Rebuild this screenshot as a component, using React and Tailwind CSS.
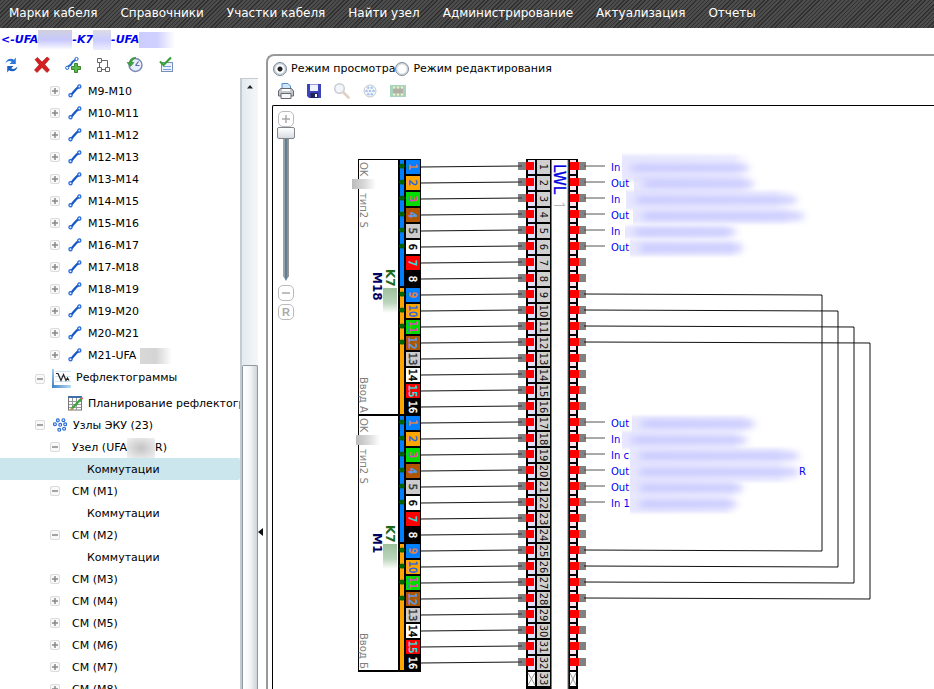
import React, { useState } from "react";

const MENU = ["Марки кабеля", "Справочники", "Участки кабеля", "Найти узел", "Администрирование", "Актуализация", "Отчеты"];

const SPANS = ["M9-M10", "M10-M11", "M11-M12", "M12-M13", "M13-M14", "M14-M15", "M15-M16", "M16-M17", "M17-M18", "M18-M19", "M19-M20", "M20-M21"];

function CableIcon() {
  return (
    <svg className="h-3.5 w-3.5 shrink-0" viewBox="0 0 14 14" fill="none">
      <path d="M3 10.500C5.500 9 5 8 6.500 7C8 6 7.500 5 10.500 3.200" stroke="#1458c8" strokeWidth="2.200" />
      <circle cx="2.500" cy="11.200" r="1.600" fill="#dcebff" stroke="#1e63d6" strokeWidth="1.200" />
      <circle cx="11.300" cy="2.500" r="1.600" fill="#dcebff" stroke="#1e63d6" strokeWidth="1.200" />
    </svg>
  );
}

function ReflectIcon() {
  return (
    <svg className="h-5 w-5 shrink-0" viewBox="0 0 20 20" fill="none">
      <defs>
        <linearGradient id="axisV" x1="0" y1="0" x2="0" y2="1">
          <stop offset="0" stopColor="#a8d0f0" />
          <stop offset="1" stopColor="#3c84c4" />
        </linearGradient>
        <linearGradient id="axisH" x1="0" y1="0" x2="1" y2="0">
          <stop offset="0" stopColor="#3c84c4" />
          <stop offset="1" stopColor="#b8dcf6" />
        </linearGradient>
      </defs>
      <path d="M3 2.500H19M3 7.500H19M3 12.500H19" stroke="#cfe6f5" />
      <rect x="0" y="0" width="2" height="19" fill="url(#axisV)" />
      <rect x="0" y="16" width="19" height="3" fill="url(#axisH)" />
      <path d="M4 4.500H6L9 11.500L11.500 5.500L14 11.500L15.500 9L17 11.500" stroke="#222" strokeWidth="1.200" />
    </svg>
  );
}

function PlanIcon() {
  return (
    <svg className="h-[15px] w-[15px] shrink-0" viewBox="0 0 15 15" fill="none">
      <rect x="0.500" y="1" width="13" height="13" fill="#fff" stroke="#777" />
      <path d="M4.500 2V14M8.500 2V14M1 5.500H13M1 8.500H13M1 11.500H13" stroke="#999" />
      <rect x="0" y="0" width="14" height="2" fill="#3f6fa8" />
      <path d="M3.500 13L13.500 2.500" stroke="#3ba53b" strokeWidth="2.400" />
      <path d="M13 3L14.500 1.500" stroke="#e06060" strokeWidth="2.400" />
      <path d="M2.500 14L4.300 12.200" stroke="#c79a5a" strokeWidth="2" />
    </svg>
  );
}

const NODE_DOTS = [[5, 2.200], [10.800, 2], [2, 6.200], [7.500, 6.800], [12.600, 6.300], [6.500, 12], [11.500, 10.800]];
function NodesIcon() {
  return (
    <svg className="h-3.5 w-3.5 shrink-0" viewBox="0 0 14.500 14" fill="#e4efff" stroke="#2a6bd4" strokeWidth="1.200">
      {NODE_DOTS.map(([x, y]) => <circle key={x} cx={x} cy={y} r="1.500" />)}
    </svg>
  );
}

function Toggle({ open }) {
  return (
    <button type="button" aria-label={open ? "Свернуть" : "Развернуть"} className="flex h-2.5 w-2.5 shrink-0 items-center justify-center rounded-xs border border-[#dcdcdc] bg-[#f8f8f8]">
      <svg className="h-1.5 w-1.5" viewBox="0 0 6 6" stroke="#888" strokeWidth="1.500">
        <path d={open ? "M0 3H6" : "M0 3H6M3 0V6"} />
      </svg>
    </button>
  );
}

function Row({ toggle, pad, icon, gap = "gap-2", children, selected, tall }) {
  return (
    <li className={`flex shrink-0 items-center whitespace-nowrap ${tall ? "h-[26px]" : "h-[22px]"} ${pad} ${selected ? "rounded-r-xs bg-[#cce6ee]" : ""}`}>
      {toggle && <Toggle open={toggle === "open"} />}
      <span className={`flex items-center ${gap}`}>
        {icon}
        <span className="flex items-center pt-0.5">{children}</span>
      </span>
    </li>
  );
}

function Tree() {
  return (
    <ul className="flex min-w-0 flex-1 flex-col overflow-hidden pt-0.5">
      {SPANS.map((s) => (
        <Row key={s} toggle="closed" pad="pl-[50px]" icon={<span className="pl-2"><CableIcon /></span>} gap="gap-1.5">{s}</Row>
      ))}
      <Row toggle="closed" pad="pl-[50px]" icon={<span className="pl-2"><CableIcon /></span>} gap="gap-1.5">
        M21-UFA<span className="ml-1 h-4 w-8 bg-linear-to-r from-[#d8d8d8] via-[#d4d4d4] to-white" />
      </Row>
      <Row tall toggle="open" pad="pl-[35px]" icon={<span className="pl-[7px]"><ReflectIcon /></span>} gap="gap-1">
        <span className="pb-1">Рефлектограммы</span>
      </Row>
      <Row pad="pl-[68px]" icon={<PlanIcon />} gap="gap-[5px]">Планирование рефлектограмм</Row>
      <Row toggle="open" pad="pl-[35px]" icon={<span className="pl-2"><NodesIcon /></span>} gap="gap-1.5">Узлы ЭКУ (23)</Row>
      <Row toggle="open" pad="pl-[50px]"><span className="pl-3">Узел (UFA</span><span className="h-5 w-7 bg-radial from-[#c4c4c4] to-[#f2f2f2]" />R)</Row>
      <Row selected pad="pl-[87px]">Коммутации</Row>
      <Row toggle="open" pad="pl-[50px]"><span className="pl-3">СМ (M1)</span></Row>
      <Row pad="pl-[87px]">Коммутации</Row>
      <Row toggle="open" pad="pl-[50px]"><span className="pl-3">СМ (M2)</span></Row>
      <Row pad="pl-[87px]">Коммутации</Row>
      {["M3", "M4", "M5", "M6", "M7", "M8"].map((n) => (
        <Row key={n} toggle="closed" pad="pl-[50px]"><span className="pl-3">СМ ({n})</span></Row>
      ))}
    </ul>
  );
}

function IconButton({ label, children }) {
  return (
    <button type="button" aria-label={label} className="flex h-4 w-4 shrink-0 items-center justify-center">
      <svg className="h-4 w-4 overflow-visible" viewBox="0 0 16 16" fill="none">{children}</svg>
    </button>
  );
}

function TreeToolbar() {
  return (
    <div className="flex h-7 shrink-0 items-center gap-[15px] pt-0.5 pl-[3px]">
      <IconButton label="Обновить">
        <path d="M2.500 6.500C3 2 8 0.500 11 2.800L12.800 0.500V7H6.500L8.800 4.800C7 3.500 4.500 4 2.500 6.500Z" fill="#2c78d8" />
        <path d="M14.500 9.500C14 14 9 15.500 6 13.200L4.200 15.500V9H10.500L8.200 11.200C10 12.500 12.500 12 14.500 9.500Z" fill="#1c5fc4" />
      </IconButton>
      <IconButton label="Удалить">
        <path d="M1 2.500L3.500 0.500L8 5L13 0L15.500 2L10.800 7.500L15.500 13L13 15.500L8 10.500L3 15.500L0.500 13L5.200 7.800Z" fill="#d42020" stroke="#a81010" strokeWidth="0.600" />
      </IconButton>
      <IconButton label="Добавить участок">
        <path d="M2.500 10L6 7.500L7.500 5L11 2.500" stroke="#1f63cc" strokeWidth="2" />
        <circle cx="2.200" cy="10.800" r="1.600" fill="#fff" stroke="#1f63cc" />
        <circle cx="11.500" cy="2" r="1.600" fill="#fff" stroke="#1f63cc" />
        <path d="M9.500 6.500H12.500V9.500H15.500V12.500H12.500V15.500H9.500V12.500H6.500V9.500H9.500Z" fill="#5cb848" stroke="#38872c" />
      </IconButton>
      <IconButton label="Схема">
        <path d="M1.500 1.500H5.500V5.500H1.500ZM1.500 10.500H5.500V14.500H1.500ZM9.500 10.500H13.500V14.500H9.500ZM3.500 5.500V10.500M5.500 12.500H9.500M5.500 3.500H11.500V10.500" stroke="#666" />
      </IconButton>
      <IconButton label="История">
        <circle cx="8.500" cy="8" r="6.500" fill="#e8effc" stroke="#7a86b0" strokeWidth="1.400" />
        <path d="M8.500 8.500H12.500M8.500 8.500L11.500 4.500" stroke="#5a6aa0" strokeWidth="1.200" />
        <path d="M9 0.500C4.500 0 2.500 3 2.500 5.500H0L3.500 9.500L7 5.500H4.800C5 3.500 6 2 9 0.500Z" fill="#3fa33f" stroke="#287a28" strokeWidth="0.500" />
      </IconButton>
      <IconButton label="Задачи">
        <rect x="3.500" y="5.500" width="11" height="9" fill="#eaf3ff" stroke="#7890b8" />
        <path d="M5 9.500H13M5 12.500H13" stroke="#7aa0d8" />
        <path d="M2 4.500L5.500 8L13 0.500" stroke="#38a030" strokeWidth="2.200" />
      </IconButton>
    </div>
  );
}

function ViewToolbar() {
  return (
    <div className="flex h-7 items-center gap-3 pl-1.5">
      <IconButton label="Печать">
        <path d="M4 7V0.500H10L12.500 3V7" fill="#cfe6fb" stroke="#4e8ecb" />
        <path d="M2.500 5.500H13.500L15.500 8V13H0.500V8Z" fill="#c4c7cc" stroke="#62666e" />
        <path d="M4 6H12V8H4Z" fill="#fff" />
        <path d="M3 10.500H13V15.500H3Z" fill="#f4f6f8" stroke="#666b73" />
      </IconButton>
      <IconButton label="Сохранить">
        <path d="M1 1H15V15H3L1 13Z" fill="#3c44b8" />
        <path d="M4 1.500H12V8H4Z" fill="#eef3ff" />
        <path d="M4.500 10H12V15H4.500Z" fill="#20265c" />
        <path d="M9 11H11V14H9Z" fill="#fff" />
      </IconButton>
      <IconButton label="Поиск">
        <circle cx="5.500" cy="5.500" r="4.800" fill="#f2f6fa" stroke="#c8cdd4" strokeWidth="1.400" />
        <path d="M9 9L14.500 14.500" stroke="#e0cfc4" strokeWidth="2.600" strokeLinecap="round" />
      </IconButton>
      <IconButton label="Кабель">
        <circle cx="8" cy="8" r="6" fill="#f6f8fb" stroke="#c3c8d2" />
        <g fill="#a8c4ec">
          {[[6.200, 4.700], [9.800, 4.700], [4.500, 8], [8, 8], [11.500, 8], [6.200, 11.300], [9.800, 11.300]].map(([x, y]) => <circle key={`${x}-${y}`} cx={x} cy={y} r="1.300" />)}
        </g>
      </IconButton>
      <IconButton label="Модуль">
        <rect x="0" y="2" width="16" height="12" fill="#a8d4bf" />
        <path d="M3 5.500H13V10.500H3Z" fill="#b4aea6" />
        <path d="M3 4.500H13M3 11.500H13" stroke="#f6efb8" strokeWidth="2" strokeDasharray="2 2" />
      </IconButton>
    </div>
  );
}

const CELLS = [
  ["#0080ff", "#f08030"], ["#ffa500", "#2060f0"], ["#00dc00", "#f030d0"], ["#b05400", "#50a0ff"],
  ["#cccccc", "#333333"], ["#ffffff", "#000000"], ["#ff0000", "#20e8e8"], ["#000000", "#ffffff"],
];

const turn = (x, y) => `translate(${x} ${y}) rotate(90)`;

function Cable({ top, name, nameY, codeY, input, smudgeX }) {
  return (
    <g>
      <rect x="358" y={top - 1} width="63" height="257" />
      <rect x="359" y={top} width="39" height="254" fill="#fff" />
      <rect x="400" y={top} width="4" height="126" fill="#0080ff" />
      <rect x="400" y={top + 128} width="4" height="126" fill="#ffa500" />
      {Array.from({ length: 16 }, (_, i) => {
        const [bg, fg] = CELLS[i % 8];
        const y = top + i * 16;
        return (
          <g key={i}>
            <rect x="406" y={y} width="14" height="14" fill={bg} />
            <text transform={turn(409, y + 7)} textAnchor="middle" fontSize="10" fill={fg} stroke={fg} strokeWidth="0.400">{i + 1}</text>
            {i % 8 < (i < 8 ? 6 : 4) && <circle cx="402" cy={y + 6} r="2.600" fill="#006400" />}
            <path d={`M421 ${y + 7}L520 ${y + 6}`} stroke="#111" />
          </g>
        );
      })}
      <g fill="#808080" fontSize="10">
        <text transform={turn(360, top + 2)}>OK</text>
        <text transform={turn(360, top + 33)}>тип2 S</text>
        <text transform={turn(360, top + 217)}>{input}</text>
      </g>
      <rect x={smudgeX} y={top + 19} width="24" height="10" fill="url(#greyFade)" />
      <g fontSize="12" fontWeight="bold">
        <text transform={turn(386, codeY)} fill="#1c6b1c">K7</text>
        <text transform={turn(373, nameY)} fill="#000060">{name}</text>
      </g>
      <rect x="383" y={codeY + 19} width="14" height="25" fill="url(#greenFade)" />
    </g>
  );
}

const PORTS = [
  [1, "In", 622, 132, 27], [2, "Out", 634, 125, 19], [3, "In", 626, 176, 19], [4, "Out", 633, 176, 15],
  [5, "In", 625, 116, 13], [6, "Out", 630, 118, 16], [17, "Out", 632, 128, 16], [18, "In", 622, 130, 18],
  [19, "In c", 630, 174, 16], [20, "Out", 630, 174, 20], [21, "Out", 630, 118, 16], [22, "In 1", 630, 112, 18],
];

function Diagram() {
  return (
    <svg className="h-[583px] w-[601px] shrink-0" viewBox="333 106 601 583" fontFamily="'DejaVu Sans', Verdana, sans-serif" aria-label="Схема коммутаций">
      <defs>
        <linearGradient id="greyFade"><stop offset="0" stopColor="#bcbcbc" /><stop offset="0.500" stopColor="#d8d8d8" /><stop offset="1" stopColor="#fff" /></linearGradient>
        <linearGradient id="greenFade" x1="0" y1="0" x2="0" y2="1"><stop offset="0" stopColor="#9cc09c" /><stop offset="0.600" stopColor="#bcd6bc" /><stop offset="1" stopColor="#fff" /></linearGradient>
        <linearGradient id="blueFade"><stop offset="0" stopColor="#dedeff" /><stop offset="0.850" stopColor="#e4e4ff" /><stop offset="1" stopColor="#fff" stopOpacity="0" /></linearGradient>
        <filter id="soft" x="-20%" y="-100%" width="140%" height="300%"><feGaussianBlur stdDeviation="4 3" /></filter>
        <filter id="edge" x="-20%" y="-50%" width="140%" height="200%"><feGaussianBlur stdDeviation="0.500 1.500" /></filter>
      </defs>
      <Cable top={160} name="M18" nameY={272} codeY={269} input="Ввод A" smudgeX={352} />
      <Cable top={416} name="M1" nameY={533} codeY={525} input="Ввод Б" smudgeX={356} />

      <rect x="526" y="159" width="52" height="530" />
      <rect x="551" y="160" width="17" height="529" fill="#fff" />
      <path d="M551.500 160V689M568 160V689" stroke="#777" />
      <path d="M551 159.500H568" stroke="#000" />
      {Array.from({ length: 33 }, (_, i) => {
        const y = 166 + i * 16;
        const free = i === 32;
        return (
          <g key={i}>
            <rect x="528" y={y - 6} width="7" height="14" fill={free ? "#fff" : "#e2e2ff"} />
            <rect x="537" y={y - 6} width="13" height="14" fill="#d0d0d0" />
            <rect x="570" y={y - 6} width="6" height="14" fill={free ? "#fff" : "#ffe4f0"} />
            {free ? (
              <path d={`M528 ${y - 5}L535 ${y + 7}M535 ${y - 5}L528 ${y + 7}M570 ${y - 5}L576 ${y + 7}M576 ${y - 5}L570 ${y + 7}`} stroke="#999" />
            ) : (
              <g>
                <rect x="518" y={y - 4} width="8" height="8" fill="#808080" />
                <path d={`M518 ${y}H522`} stroke="#333" />
                <rect x="526" y={y - 4} width="8" height="8" fill="#f00" />
                <rect x="570" y={y - 4} width="9" height="8" fill="#f00" />
                <rect x="579" y={y - 4} width="7" height="8" fill="#808080" />
              </g>
            )}
            <text transform={turn(540, y + 1)} textAnchor="middle" fontSize="10" fill="#111">{i + 1}</text>
          </g>
        );
      })}
      <text transform={turn(554, 164)} fontSize="15" fill="#0000e0" stroke="#0000e0" strokeWidth="0.300">LWL</text>
      <text transform={turn(554, 201)} fontSize="15" fill="#aaa" fontFamily="'Open Sans', sans-serif" fontWeight="300">1</text>

      {[0, 1, 2, 3].map((i) => {
        const x = 822 + i * 16;
        const y = 294 + i * 16;
        const end = 550 + i * 16;
        return <path key={i} d={`M584 ${y}L${x} ${y + 1}V${end + 1}L584 ${end}`} fill="none" stroke="#111" />;
      })}

      {PORTS.map(([row, label, x, w, h]) => {
        const y = 166 + (row - 1) * 16;
        return (
          <g key={row}>
            <path d={`M584 ${y}H605`} stroke="#555" />
            <rect x={x} y={y + 2 - h / 2} width={w} height={h} fill="url(#blueFade)" opacity="0.700" filter="url(#edge)" />
            <rect x={x + 10} y={y - 2} width={w - 16} height="8" fill="#b4b4ff" opacity="0.600" filter="url(#soft)" />
            <text x="611" y={y + 5} fontSize="10" fill="#0000f0">{label}</text>
          </g>
        );
      })}
      <text x="799" y="475" fontSize="10" fill="#0000f0">R</text>
    </svg>
  );
}

function ZoomButton({ label, children }) {
  return (
    <button type="button" aria-label={label} className="flex h-4 w-4 shrink-0 items-center justify-center rounded-[5px] border border-[#bbb] font-['Liberation_Sans',sans-serif] text-[11px] leading-none font-bold text-[#aaa]">
      {children}
    </button>
  );
}

function ZoomBar() {
  const [zoom, setZoom] = useState(0);
  return (
    <div className="flex w-[60px] shrink-0 flex-col items-start pt-[5px] pl-[5px]">
      <div className="flex w-4 flex-col items-center">
        <ZoomButton label="Увеличить">
          <svg className="h-2 w-2" viewBox="0 0 8 8" stroke="#aaa" strokeWidth="1.500"><path d="M0 4H8M4 0V8" /></svg>
        </ZoomButton>
        <input
          type="range"
          aria-label="Масштаб"
          min="0"
          max="100"
          value={zoom}
          onChange={(e) => setZoom(Number(e.target.value))}
          className="h-[150px] w-[18px] shrink-0 appearance-none bg-[linear-gradient(90deg,transparent_6px,#a0a4a8_6px,#9a9ea2_8px,#5f7f95_8px,#5f7f95_10px,#8a8e92_10px,#9a9a9a_12px,transparent_12px)] [writing-mode:vertical-lr] [&::-webkit-slider-thumb]:h-3 [&::-webkit-slider-thumb]:w-[18px] [&::-webkit-slider-thumb]:appearance-none [&::-webkit-slider-thumb]:rounded-xs [&::-webkit-slider-thumb]:border [&::-webkit-slider-thumb]:border-[#80868e] [&::-webkit-slider-thumb]:bg-linear-to-b [&::-webkit-slider-thumb]:from-white [&::-webkit-slider-thumb]:to-[#d8dce2]"
        />
        <svg className="mb-1 h-1 w-1.5 shrink-0" viewBox="0 0 6 4"><path d="M1 0H5L3 4Z" fill="#5f7f95" /></svg>
        <div className="flex flex-col gap-[3px]">
          <ZoomButton label="Уменьшить">
            <svg className="h-2 w-2" viewBox="0 0 8 8" stroke="#aaa" strokeWidth="1.500"><path d="M0 4H8" /></svg>
          </ZoomButton>
          <ZoomButton label="Сбросить масштаб">R</ZoomButton>
        </div>
      </div>
    </div>
  );
}

function ModeRadio({ id, label, checked, onChange }) {
  return (
    <span className="flex items-center gap-1">
      <input
        id={id}
        type="radio"
        name="mode"
        checked={checked}
        onChange={onChange}
        className="h-3.5 w-3.5 shrink-0 appearance-none rounded-full border border-[#7c8894] bg-[radial-gradient(circle,#fff_0_4px,#d4dbe2_5px)] checked:bg-[radial-gradient(circle,#222_0_2px,#fff_3px_4px,#c8d4e0_5px)]"
      />
      <label htmlFor={id}>{label}</label>
    </span>
  );
}

export default function App() {
  const [mode, setMode] = useState("view");
  return (
    <div className="flex h-screen flex-col overflow-hidden bg-white font-['DejaVu_Sans',Verdana,sans-serif] text-[11px] leading-4 text-black">
      <nav className="flex h-7 shrink-0 items-center gap-[23px] bg-[repeating-linear-gradient(135deg,#303030_0_1px,#4c4c4c_1px_3px)] pb-0.5 pl-[9px] text-xs whitespace-nowrap text-white">
        {MENU.map((m) => <a key={m} href="#">{m}</a>)}
      </nav>
      <h1 className="flex h-[22px] shrink-0 items-center pt-px pl-px font-bold text-[#0000f0] italic">
        &lt;-UFA
        <span className="h-5 w-[34px] bg-linear-to-b from-[#d0d0dc] via-[#c8c8ff] to-white" />
        -K7
        <span className="h-5 w-[18px] bg-linear-to-b from-[#dcdce4] via-[#ccccff] to-[#eeeeff]" />
        -UFA
        <span className="h-4 w-9 bg-linear-to-r from-[#ccccff] via-[#d0d0ff] to-white" />
      </h1>
      <div className="flex min-h-0 flex-1">
        <aside className="flex w-[258px] shrink-0 flex-col">
          <TreeToolbar />
          <div className="flex min-h-0 flex-1">
            <Tree />
            <div className="flex w-[18px] shrink-0 flex-col border-t border-l-2 border-[#c4ccd2] bg-linear-to-r from-[#e4eaef] to-[#f4f7f9]">
              <svg className="mt-1 h-2 w-full shrink-0" viewBox="0 0 16 8"><path d="M5 5.500L8 2L11 5.500Z" fill="#222" /></svg>
              <div className="mt-[274px] w-4 flex-1 rounded-t-xs border border-b-0 border-[#8c98a4] bg-linear-to-r from-white via-[#f4f6f7] to-[#cdd3d8]" />
            </div>
          </div>
        </aside>
        <button type="button" aria-label="Скрыть дерево" className="flex w-2 shrink-0 items-start pt-[478px]">
          <svg className="h-2 w-1.5" viewBox="0 0 6 8"><path d="M5 0V8L0 4Z" fill="#111" /></svg>
        </button>
        <main className="mt-1 flex min-w-0 flex-1 flex-col overflow-hidden rounded-tl-lg border-t-2 border-l-2 border-[#999] pl-1">
          <div className="flex h-[21px] shrink-0 items-end pl-px">
            <ModeRadio id="mode-view" label="Режим просмотра" checked={mode === "view"} onChange={() => setMode("view")} />
            <ModeRadio id="mode-edit" label="Режим редактирования" checked={mode === "edit"} onChange={() => setMode("edit")} />
          </div>
          <div className="shrink-0"><ViewToolbar /></div>
          <section className="flex min-h-0 flex-1 overflow-hidden rounded-tl-xs border-t border-l border-black">
            <ZoomBar />
            <Diagram />
          </section>
        </main>
      </div>
    </div>
  );
}
